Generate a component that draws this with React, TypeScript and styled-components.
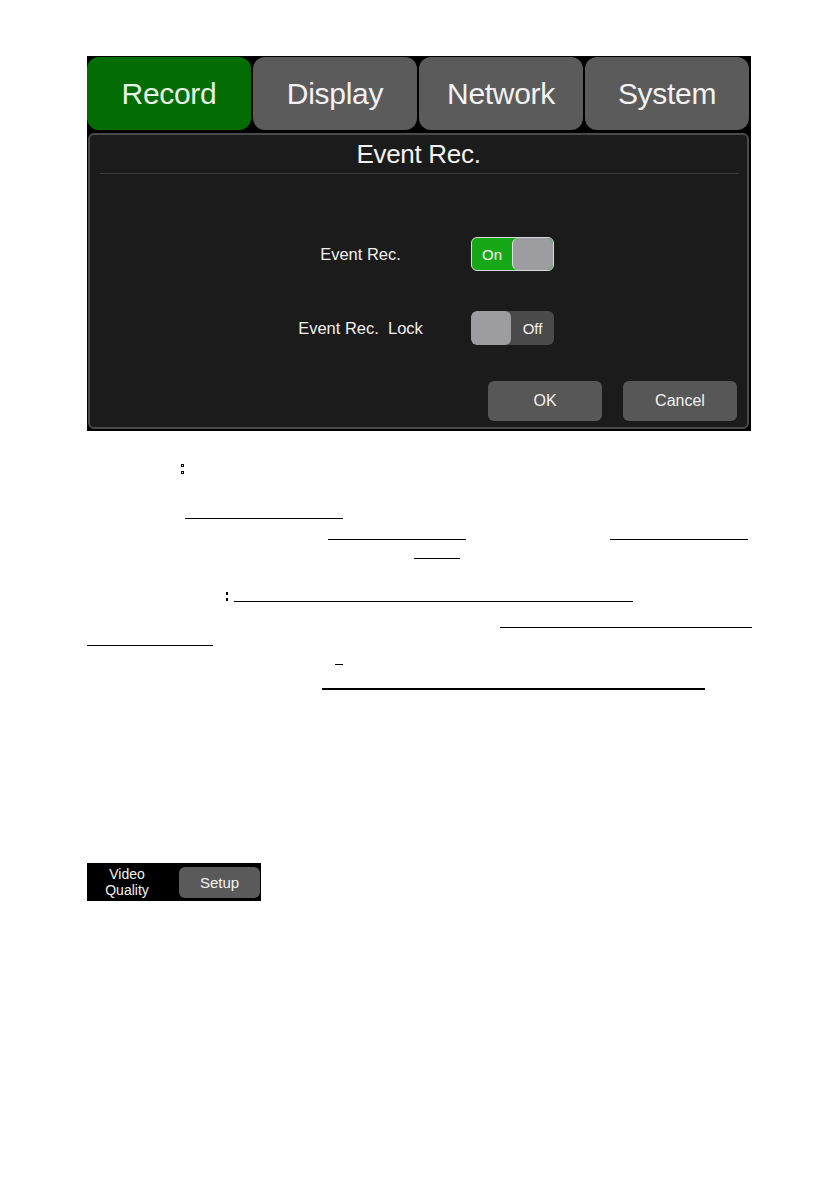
import React from 'react';
import styled, { createGlobalStyle } from 'styled-components';

const GlobalStyle = createGlobalStyle`
  html, body {
    margin: 0;
    padding: 0;
    background: #fff;
  }
  body {
    font-family: "Liberation Sans", Arial, sans-serif;
  }
`;

const Page = styled.div`
  width: 839px;
  min-height: 1191px;
  padding-top: 56px;
  box-sizing: border-box;
`;

const Screen = styled.div`
  margin-left: 87px;
  width: 664px;
  height: 375px;
  background: #000;
  box-sizing: border-box;
  padding: 1px 2px 2px 0;
  display: flex;
  flex-direction: column;
`;

const Tabs = styled.div`
  display: grid;
  grid-template-columns: repeat(4, 1fr);
  gap: 2px;
  height: 73px;
`;

const Tab = styled.div<{ $active?: boolean }>`
  background: ${(p) => (p.$active ? '#036c03' : '#5b5b5b')};
  border-radius: 12px;
  display: flex;
  align-items: center;
  justify-content: center;
  color: ${(p) => (p.$active ? '#e6f3e6' : '#f2f2f2')};
  font-size: 30px;
  letter-spacing: -0.3px;
`;

const Panel = styled.div`
  flex: 1;
  margin: 3px 0 0 1px;
  background: #1b1b1b;
  border: 2px solid #4a4a4a;
  border-radius: 6px;
  display: flex;
  flex-direction: column;
  box-sizing: border-box;
`;

const PanelTitle = styled.div`
  height: 38px;
  line-height: 38px;
  text-align: center;
  color: #f2f2f2;
  font-size: 26px;
  letter-spacing: -0.3px;
`;

const Divider = styled.div`
  height: 1px;
  background: #3a3a3a;
  margin: 0 8px 0 10px;
`;

const Settings = styled.div`
  display: flex;
  flex-direction: column;
  gap: 40px;
  padding-top: 63px;
`;

const SettingRow = styled.div`
  display: flex;
  align-items: center;
  padding-left: 160px;
`;

const Label = styled.div`
  width: 221px;
  text-align: center;
  color: #f0f0f0;
  font-size: 16.5px;
  white-space: pre;
`;

const Toggle = styled.div<{ $on?: boolean }>`
  width: 83px;
  height: 34px;
  box-sizing: border-box;
  border-radius: 6px;
  display: flex;
  flex-direction: ${(p) => (p.$on ? 'row' : 'row-reverse')};
  overflow: hidden;
  background: ${(p) => (p.$on ? '#17a817' : '#4a4a4a')};
  border: ${(p) => (p.$on ? '1.5px solid #d8d8d8' : 'none')};
`;

const ToggleText = styled.div`
  flex: 1;
  display: flex;
  align-items: center;
  justify-content: center;
  color: #f4f4f4;
  font-size: 15px;
`;

const Knob = styled.div<{ $on?: boolean }>`
  width: ${(p) => (p.$on ? '41px' : '40px')};
  background: #9d9da1;
  border-radius: 6px;
  box-sizing: border-box;
  border-left: ${(p) => (p.$on ? '1.5px solid #e0e0e0' : 'none')};
`;

const Actions = styled.div`
  margin-top: auto;
  display: flex;
  justify-content: flex-end;
  gap: 21px;
  padding: 0 10px 6px 0;
`;

const ActionButton = styled.div`
  width: 114px;
  height: 40px;
  border-radius: 6px;
  background: #575757;
  color: #f2f2f2;
  font-size: 16px;
  display: flex;
  align-items: center;
  justify-content: center;
`;

const Notes = styled.div`
  display: flex;
  flex-direction: column;
`;

const NoteLine = styled.div<{ $h: number }>`
  height: ${(p) => p.$h}px;
  display: flex;
  align-items: flex-end;
`;

const Rule = styled.span<{ $ml: number; $w: number; $thick?: boolean }>`
  display: block;
  margin-left: ${(p) => p.$ml}px;
  width: ${(p) => p.$w}px;
  height: ${(p) => (p.$thick ? 2 : 1)}px;
  background: #000;
`;

const Colon = styled.span<{ $ml: number; $hollow?: boolean }>`
  display: flex;
  flex-direction: column;
  gap: ${(p) => (p.$hollow ? 4 : 3)}px;
  margin-left: ${(p) => p.$ml}px;
  margin-bottom: 1px;

  &::before,
  &::after {
    content: '';
    display: block;
    width: ${(p) => (p.$hollow ? 3 : 2)}px;
    height: 3px;
    box-sizing: border-box;
    border: ${(p) => (p.$hollow ? '1px solid #000' : 'none')};
    background: ${(p) => (p.$hollow ? 'transparent' : '#000')};
  }
`;

const Strip = styled.div`
  margin: 173px 0 0 87px;
  width: 174px;
  height: 38px;
  background: #000;
  display: flex;
  align-items: center;
`;

const StripLabel = styled.div`
  width: 80px;
  text-align: center;
  color: #f2f2f2;
  font-size: 14px;
  line-height: 16px;
`;

const StripButton = styled.div`
  margin-left: 12px;
  width: 81px;
  height: 31px;
  border-radius: 6px;
  background: #5a5a5a;
  color: #f2f2f2;
  font-size: 15px;
  display: flex;
  align-items: center;
  justify-content: center;
`;

const tabs = ['Record', 'Display', 'Network', 'System'];

export default function App() {
  return (
    <>
      <GlobalStyle />
      <Page>
        <Screen>
          <Tabs>
            {tabs.map((t, i) => (
              <Tab key={t} $active={i === 0}>
                {t}
              </Tab>
            ))}
          </Tabs>
          <Panel>
            <PanelTitle>Event Rec.</PanelTitle>
            <Divider />
            <Settings>
              <SettingRow>
                <Label>Event Rec.</Label>
                <Toggle $on>
                  <ToggleText>On</ToggleText>
                  <Knob $on />
                </Toggle>
              </SettingRow>
              <SettingRow>
                <Label>{'Event Rec.  Lock'}</Label>
                <Toggle>
                  <ToggleText>Off</ToggleText>
                  <Knob />
                </Toggle>
              </SettingRow>
            </Settings>
            <Actions>
              <ActionButton>OK</ActionButton>
              <ActionButton>Cancel</ActionButton>
            </Actions>
          </Panel>
        </Screen>

        <Notes>
          <NoteLine $h={44}>
            <Colon $ml={181} $hollow />
          </NoteLine>
          <NoteLine $h={44}>
            <Rule $ml={185} $w={158} />
          </NoteLine>
          <NoteLine $h={21}>
            <Rule $ml={328} $w={138} />
            <Rule $ml={144} $w={138} />
          </NoteLine>
          <NoteLine $h={19}>
            <Rule $ml={414} $w={46} />
          </NoteLine>
          <NoteLine $h={43}>
            <Colon $ml={226} />
            <Rule $ml={6} $w={399} />
          </NoteLine>
          <NoteLine $h={26}>
            <Rule $ml={500} $w={252} />
          </NoteLine>
          <NoteLine $h={18}>
            <Rule $ml={87} $w={126} />
          </NoteLine>
          <NoteLine $h={19}>
            <Rule $ml={335} $w={8} />
          </NoteLine>
          <NoteLine $h={25}>
            <Rule $ml={322} $w={383} $thick />
          </NoteLine>
        </Notes>

        <Strip>
          <StripLabel>
            Video
            <br />
            Quality
          </StripLabel>
          <StripButton>Setup</StripButton>
        </Strip>
      </Page>
    </>
  );
}
